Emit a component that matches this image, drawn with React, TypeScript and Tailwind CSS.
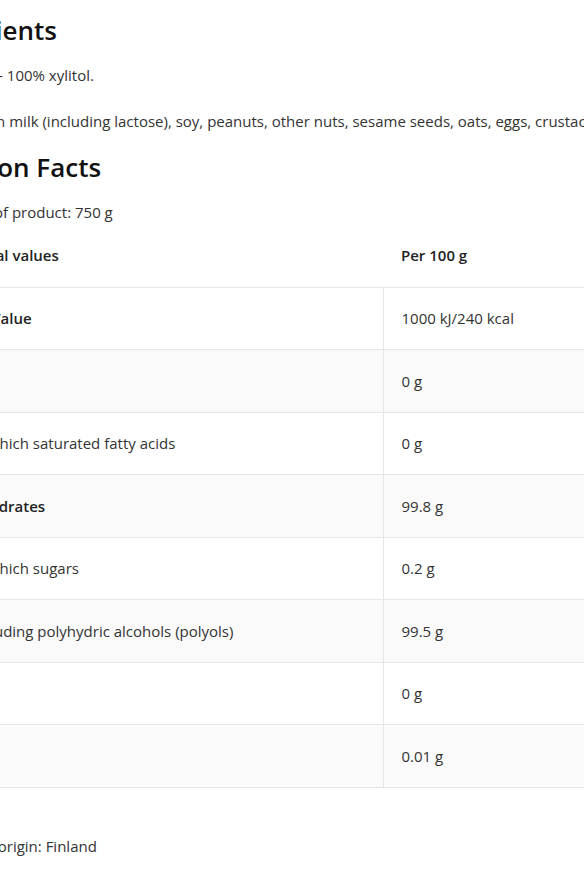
const rows = [
  { label: 'Energy Value', value: '1000 kJ/240 kcal', bold: true, sub: false },
  { label: 'Fat', value: '0 g', bold: true, sub: false },
  { label: 'of which saturated fatty acids', value: '0 g', bold: false, sub: true },
  { label: 'Carbohydrates', value: '99.8 g', bold: true, sub: false },
  { label: 'of which sugars', value: '0.2 g', bold: false, sub: true },
  { label: 'including polyhydric alcohols (polyols)', value: '99.5 g', bold: false, sub: true },
  { label: 'Protein', value: '0 g', bold: true, sub: false },
  { label: 'Salt', value: '0.01 g', bold: true, sub: false },
];

export default function App() {
  return (
    <div className="w-full h-screen overflow-hidden bg-white">
      <div
        className="ml-[-80px] w-[926px] pt-[14px] text-[15px] text-[#333]"
        style={{ fontFamily: '"Open Sans", "Noto Sans", sans-serif' }}
      >
        <h2 className="ml-[-6px] text-[26px] leading-[32px] font-semibold text-[#111]">Ingredients</h2>
        <p className="mt-[17px] leading-[24px]">Sweetener - 100% xylitol.</p>
        <p className="mt-[22px] leading-[24px] whitespace-nowrap">
          May contain milk (including lactose), soy, peanuts, other nuts, sesame seeds, oats, eggs, crustaceans.
        </p>

        <h2 className="ml-[-6px] mt-[18px] text-[26px] leading-[32px] font-semibold text-[#111]">Nutrition Facts</h2>
        <p className="mt-[17px] leading-[24px]">Packaging of product: 750 g</p>

        <table className="w-full border-collapse">
          <thead>
            <tr className="h-[63px]">
              <th className="w-1/2 pl-[9px] pr-[18px] text-left font-semibold text-[#222]">Nutritional values</th>
              <th className="w-1/2 px-[18px] text-left font-semibold text-[#222]">Per 100 g</th>
            </tr>
          </thead>
          <tbody>
            {rows.map((r, i) => (
              <tr key={i} className={`h-[62.5px] border-t border-b border-[#e6e6e6] ${i % 2 === 1 ? 'bg-[#fafafa]' : 'bg-white'}`}>
                <td
                  className={`border-r border-[#e6e6e6] pr-[18px] ${r.sub ? 'pl-[50px]' : 'pl-[18px]'} ${r.bold ? 'font-semibold text-[#222]' : ''}`}
                >
                  {r.label}
                </td>
                <td className="px-[18px]">{r.value}</td>
              </tr>
            ))}
          </tbody>
        </table>

        <p className="mt-[46px] leading-[24px]">Country of origin: Finland</p>
      </div>
    </div>
  );
}
